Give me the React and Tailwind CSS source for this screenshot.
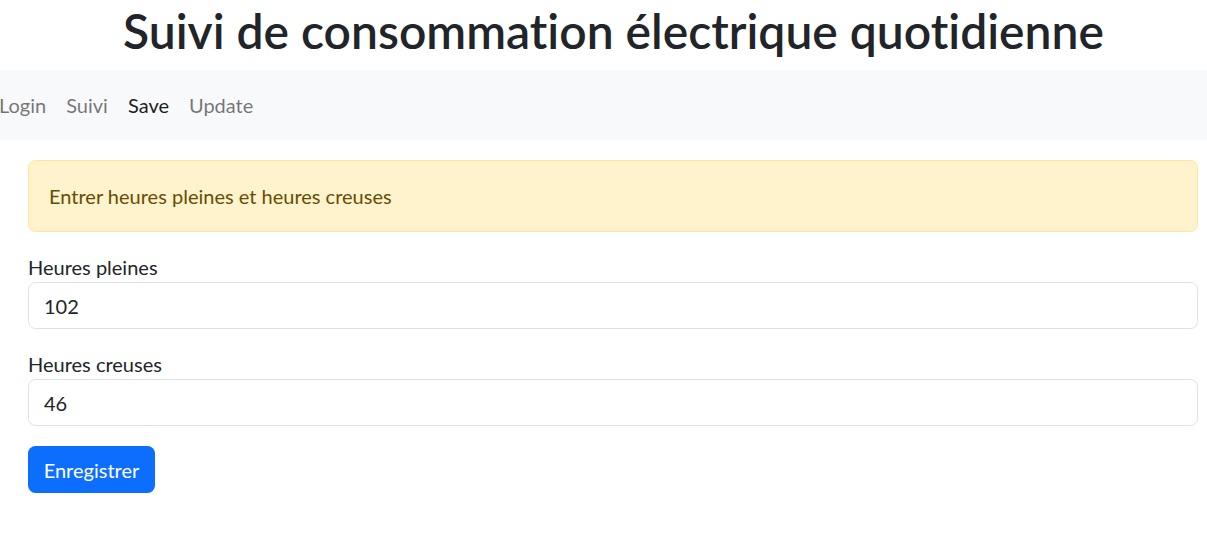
export default function App() {
  return (
    <div className="min-h-[558px] bg-white text-[#212529] [font-family:Lato,sans-serif] [font-variant-ligatures:none]">
      <h1 className="h-[60px] mb-[10px] text-center text-[48px] leading-[62px] font-semibold pl-[20px]">
        Suivi de consommation électrique quotidienne
      </h1>
      <nav className="h-[70px] bg-[#f8f9fa] flex items-center -ml-[11px] text-[20px] leading-[30px]">
        <a className="px-[10px] text-[rgba(0,0,0,0.55)]">Login</a>
        <a className="px-[10px] text-[rgba(0,0,0,0.55)]">Suivi</a>
        <a className="px-[10px] text-[rgba(0,0,0,0.9)]">Save</a>
        <a className="px-[10px] text-[rgba(0,0,0,0.55)]">Update</a>
      </nav>
      <div className="ml-[28px] mr-[9px] pt-[20px] text-[20px] leading-[30px]">
        <div className="mb-[20px] h-[72px] rounded-[7.5px] border border-[#ffe69c] bg-[#fff3cd] text-[#664d03] px-[20px] py-[20px] leading-[30px]">
          Entrer heures pleines et heures creuses
        </div>
        <div className="mb-[20px]">
          <label className="block">Heures pleines</label>
          <input
            readOnly
            value="102"
            className="block w-full h-[47px] rounded-[7.5px] border border-[#dee2e6] px-[15px] text-[20px] outline-none"
          />
        </div>
        <div className="mb-[20px]">
          <label className="block">Heures creuses</label>
          <input
            readOnly
            value="46"
            className="block w-full h-[47px] rounded-[7.5px] border border-[#dee2e6] px-[15px] text-[20px] outline-none"
          />
        </div>
        <button className="h-[47px] w-[127px] rounded-[7.5px] bg-[#0d6efd] text-white text-[20px]">
          Enregistrer
        </button>
      </div>
    </div>
  );
}
